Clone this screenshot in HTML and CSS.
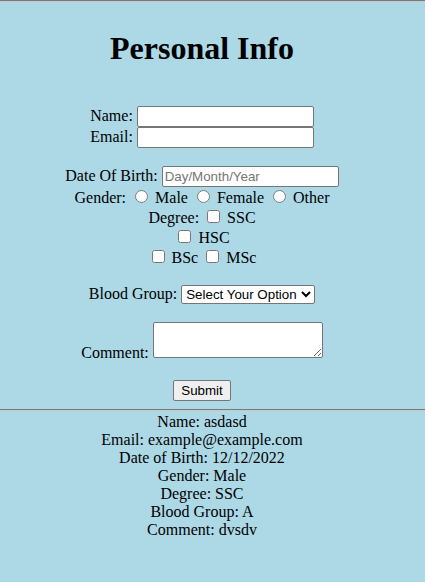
FILE: index.html
```html
<!DOCTYPE html>
<html>
<head>
<meta charset="utf-8">
<title>Personal Info</title>
<link rel="stylesheet" href="styles.css">
</head>
<body>
<hr class="rule rule-top">
<div class="page">
  <h1 class="title">Personal Info</h1>
  <form class="form">
    <div class="row">Name: <input class="field" type="text"></div>
    <div class="row">Email: <input class="field" type="text"></div>
    <div class="row spaced">Date Of Birth: <input class="field" type="text" placeholder="Day/Month/Year"></div>
    <div class="row">Gender: <input type="radio" name="g"> Male <input type="radio" name="g"> Female <input type="radio" name="g"> Other</div>
    <div class="row">Degree: <input type="checkbox"> SSC</div>
    <div class="row"><input type="checkbox"> HSC</div>
    <div class="row"><input type="checkbox"> BSc <input type="checkbox"> MSc</div>
    <div class="row spaced">Blood Group: <select class="select"><option>Select Your Option</option><option>A</option><option>B</option><option>AB</option><option>O</option></select></div>
    <div class="row spaced">Comment: <textarea class="area"></textarea></div>
    <div class="row spaced"><button class="submit" type="button">Submit</button></div>
  </form>
</div>
<hr class="rule rule-bottom">
<div class="page output">
  <div>Name: asdasd</div>
  <div>Email: example@example.com</div>
  <div>Date of Birth: 12/12/2022</div>
  <div>Gender: Male</div>
  <div>Degree: SSC</div>
  <div>Blood Group: A</div>
  <div>Comment: dvsdv</div>
</div>
</body>
</html>
```

FILE: styles.css
```css
html, body {
  margin: 0;
  background: #add8e6;
}
body {
  font-family: "Liberation Serif", "Times New Roman", serif;
  font-size: 16px;
  color: #000;
  min-height: 582px;
}
.rule {
  margin: 0;
  border: 0;
  border-top: 1px solid #7a7a7a;
  border-bottom: 1px solid #c8c8c8;
  height: 0;
}
.rule-bottom {
  margin-top: 8px;
}
.page {
  text-align: center;
  padding-right: 21px;
}
.title {
  font-size: 32px;
  font-weight: bold;
  margin: 28px 0 21px;
}
.form {
  padding-top: 18px;
}
.spaced {
  margin-top: 18px;
}
.field {
  font-family: "Liberation Sans", Arial, sans-serif;
  font-size: 13.33px;
  width: 177px;
  height: 21px;
  box-sizing: border-box;
  margin: 0;
  border: 1px solid #767676;
  border-radius: 2px;
  padding: 1px 2px;
  background: #fff;
}
.field::placeholder {
  color: #757575;
}
.select {
  font-family: "Liberation Sans", Arial, sans-serif;
  font-size: 13.33px;
  width: 134px;
  height: 19px;
  margin: 0;
  border: 1px solid #767676;
  border-radius: 2px;
  background: #fff;
  color: #000;
}
.area {
  width: 170px;
  height: 36px;
  box-sizing: border-box;
  margin: 0;
  border: 1px solid #767676;
  border-radius: 2px;
  font-family: "Liberation Mono", monospace;
  font-size: 13.33px;
  vertical-align: baseline;
}
.submit {
  font-family: "Liberation Sans", Arial, sans-serif;
  font-size: 13.33px;
  width: 58px;
  height: 21px;
  margin: 0;
  padding: 1px 6px;
  border: 1px solid #767676;
  border-radius: 2px;
  background: #efefef;
  color: #000;
}
.output {
  padding-top: 2px;
}
.output div {
  line-height: 18px;
}
```
